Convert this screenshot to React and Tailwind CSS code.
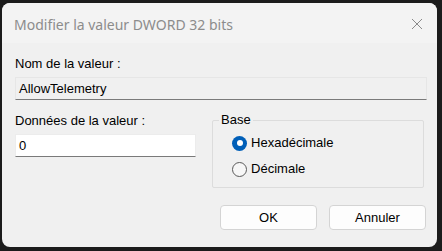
export default function App() {
  const body = { fontFamily: '"Liberation Sans", Arial, sans-serif' };
  return (
    <div className="w-[442px] h-[251px] bg-[#1b1b1b] pt-[3px] pl-[2px] overflow-hidden">
      <div className="w-[435px] h-[244px] rounded-[8px] bg-[#f0f0f0] flex flex-col overflow-hidden" style={body}>
        <div className="h-[40px] flex items-center justify-between pl-[12px] pr-[10px] bg-[#f3f3f3]">
          <span className="text-[14px] text-[#8c8c8c] pt-[2px]" style={{ fontFamily: '"Noto Sans", "Open Sans", sans-serif' }}>
            Modifier la valeur DWORD 32 bits
          </span>
          <svg width="12" height="12" viewBox="0 0 12 12" className="mr-[4px] mt-[2px]">
            <path d="M1 1 L11 11 M11 1 L1 11" stroke="#8a8a8a" strokeWidth="1" fill="none" />
          </svg>
        </div>
        <div className="flex flex-col px-[13px] pt-[13px] text-[13px] text-black">
          <div className="leading-[16px]">Nom de la valeur :</div>
          <div className="mt-[5px] h-[23px] w-[412px] bg-[#f0f0f0] border border-[#e6e6e6] border-b-[#7a7a7a] flex items-center pl-[3px]">
            AllowTelemetry
          </div>
          <div className="flex mt-[13px]">
            <div className="flex flex-col w-[184px]">
              <div className="leading-[16px]">Données de la valeur :</div>
              <div className="mt-[5px] h-[23px] bg-white border border-[#ececec] border-b-[#7a7a7a] flex items-center pl-[3px]">
                0
              </div>
            </div>
            <div className="ml-[16px] mt-[7px] relative w-[215px] h-[68px] border border-[#dcdcdc] rounded-[2px] flex flex-col pl-[19px] pt-[14px] gap-[10px]">
              <span className="absolute -top-[9px] left-[6px] bg-[#f0f0f0] px-[2px] leading-[16px]">Base</span>
              <div className="flex items-center gap-[4px] leading-[16px]">
                <span className="w-[15px] h-[15px] rounded-full bg-[#005fb8] flex items-center justify-center">
                  <span className="w-[6px] h-[6px] rounded-full bg-white"></span>
                </span>
                <span>Hexadécimale</span>
              </div>
              <div className="flex items-center gap-[4px] leading-[16px]">
                <span className="w-[15px] h-[15px] rounded-full bg-[#f7f7f7] border border-[#5a5a5a]"></span>
                <span>Décimale</span>
              </div>
            </div>
          </div>
          <div className="flex justify-end gap-[12px] mt-[17px]">
            <button className="w-[97px] h-[25px] rounded-[4px] bg-[#fdfdfd] border border-[#d4d4d4] text-[13px]">OK</button>
            <button className="w-[97px] h-[25px] rounded-[4px] bg-[#fdfdfd] border border-[#d4d4d4] text-[13px] mr-[-2px]">Annuler</button>
          </div>
        </div>
      </div>
    </div>
  );
}
